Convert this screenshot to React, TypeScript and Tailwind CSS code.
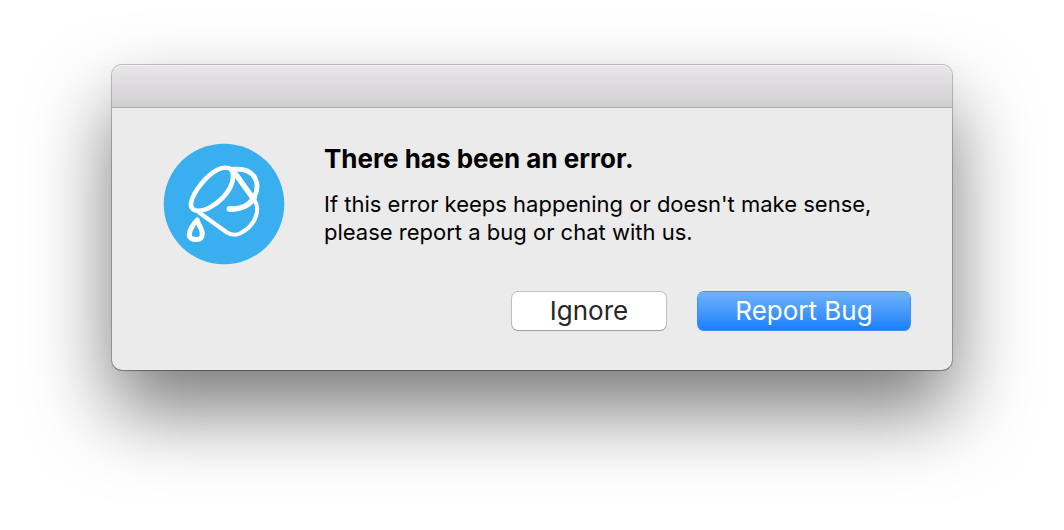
function AppIcon() {
  return (
    <svg viewBox="0 0 122 122" className="size-[122px] shrink-0" role="img" aria-label="Paint bucket">
      <circle cx="61" cy="61" r="60.3" fill="#3aafef" />
      <g fill="none" stroke="#fff" strokeLinecap="round" strokeLinejoin="round">
        <path
          strokeWidth="4.6"
          d="M69 27C66 24 60 24 54 27C43 33 31 48 28.2 59C27 64 29.5 67.5 35 67.7C42 68 52 62.5 60 54.5C66 48 69.5 41 70 35C70.2 32 70 30 69 27Z"
        />
        <path strokeWidth="4.8" d="M68 26.500C80 25 88.500 28.500 92 35C94.800 40.500 94.500 48 91 54.500" />
        <path strokeWidth="5.8" d="M91 54.500C87 62 78 66.500 66.500 66" />
        <path strokeWidth="5.4" d="M70.500 28L90.500 56" />
        <path
          strokeWidth="4"
          d="M90.500 56C94.500 61 95 67 93 73C90.500 81 84 87 77 90.500C72 92.500 68.500 92.200 64 89.500L36 69.500"
        />
        <path
          strokeWidth="5"
          d="M34.300 77C30 81 26.200 88 26.200 92C26.500 96 30 96.500 33.500 96.500C37.500 96.500 39.500 94.500 39.300 90.500C39 86.500 36.500 83 34.800 79"
        />
      </g>
    </svg>
  );
}

export default function App() {
  return (
    <main className="flex justify-center bg-white px-6 pt-[65px] pb-40 font-['Inter','Liberation_Sans',sans-serif]">
      <section
        role="alertdialog"
        aria-labelledby="error-title"
        aria-describedby="error-text"
        className="w-full max-w-[840px] rounded-[10px] bg-[#ebebeb] shadow-[0_0_0_1px_rgba(0,0,0,0.22),0_1px_1px_rgba(0,0,0,0.2),0_40px_80px_rgba(0,0,0,0.53)]"
      >
        <header className="h-[43px] rounded-t-[10px] border-t border-b border-t-[#f6f5f6] border-b-[#b0aeb0] bg-linear-to-b from-[#e8e6e8] to-[#d0ced0]" />
        <div className="flex gap-[39px] pt-[35px] pr-[41px] pl-[51px]">
          <AppIcon />
          <div className="min-w-0 flex-1 text-black">
            <h1 id="error-title" className="text-[26px] leading-8 font-bold">
              There has been an error.
            </h1>
            <p id="error-text" className="mt-[15px] text-[22px] leading-7">
              If this error keeps happening or doesn't make sense,
              <br />
              please report a bug or chat with us.
            </p>
          </div>
        </div>
        <footer className="flex justify-end gap-8 pt-[27px] pr-[42px] pb-10 text-[26px] leading-[38px]">
          <button
            type="button"
            className="h-[38px] w-[154px] rounded-[6px] bg-white text-[#262626] shadow-[0_0_0_1px_rgba(0,0,0,0.17),0_1px_1px_rgba(0,0,0,0.2)]"
          >
            Ignore
          </button>
          <button
            type="button"
            className="h-[38px] w-[212px] rounded-[6px] bg-linear-to-b from-[#6db3f8] to-[#157efc] text-white shadow-[0_0_0_1px_#3d90f6,0_1px_0_#1569f8]"
          >
            Report Bug
          </button>
        </footer>
      </section>
    </main>
  );
}
